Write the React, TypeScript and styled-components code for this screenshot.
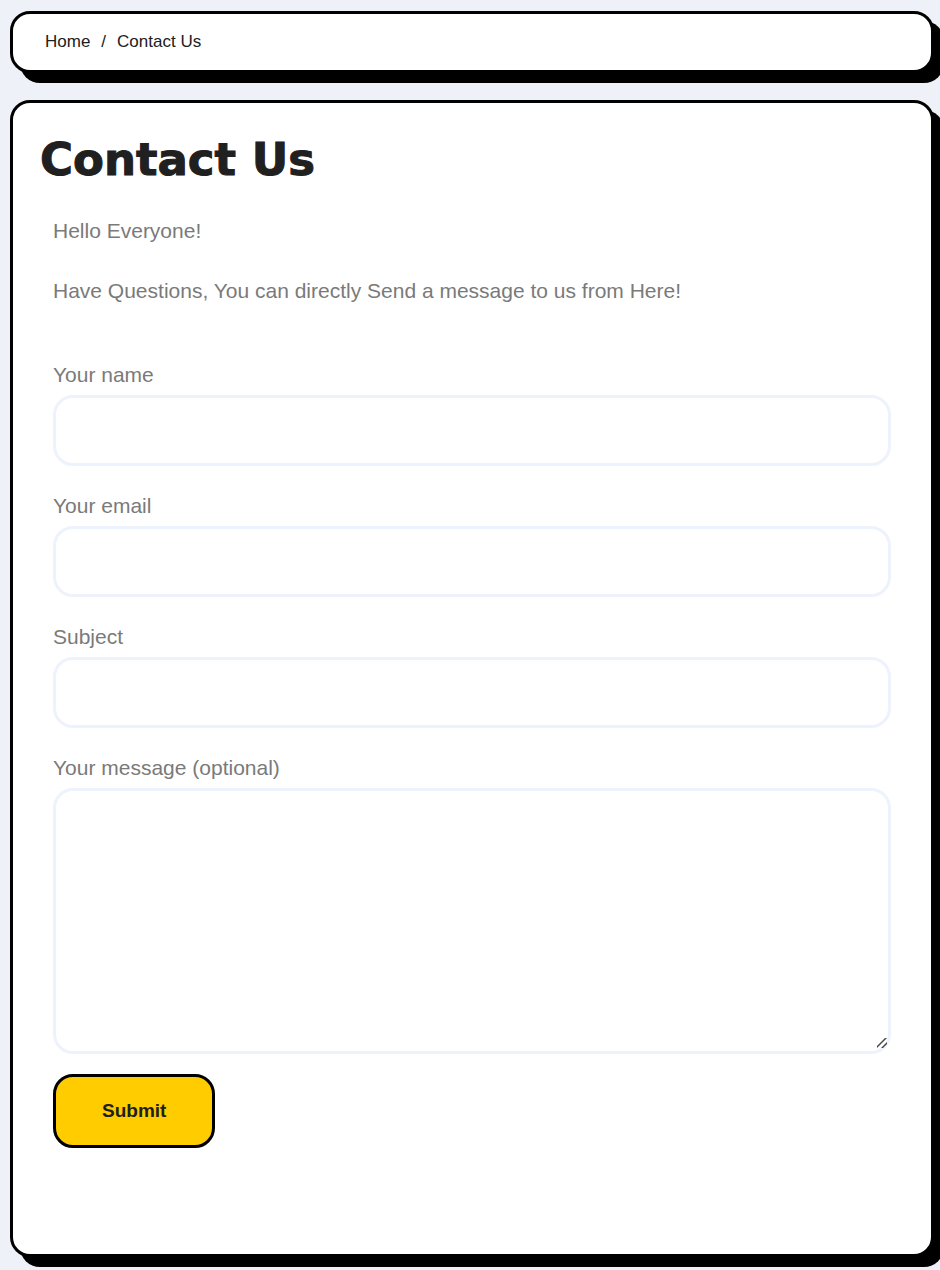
import React from 'react';
import styled, { createGlobalStyle } from 'styled-components';

const GlobalStyle = createGlobalStyle`
  *, *::before, *::after {
    box-sizing: border-box;
  }
  body {
    margin: 0;
    background: #eef1f8;
    color: #7a7a7a;
    font-family: "Liberation Sans", Arial, sans-serif;
    font-size: 21px;
    overflow-x: hidden;
  }
`;

const Page = styled.div`
  display: flex;
  flex-direction: column;
  gap: 27px;
  padding: 11px 6px 13px 10px;
  overflow-x: hidden;
`;

const panel = `
  background: #fff;
  border: 3px solid #000;
  border-radius: 20px;
  box-shadow: 10px 10px 0 #000;
`;

const Breadcrumb = styled.nav`
  ${panel}
  padding: 18px 32px;
`;

const Crumbs = styled.ol`
  display: flex;
  gap: 11px;
  margin: 0;
  padding: 0;
  list-style: none;
  color: #202020;
  font-size: 17px;
  line-height: 20px;
`;

const Crumb = styled.li`
  display: flex;
  gap: 11px;
`;

const CrumbLink = styled.a`
  color: inherit;
  text-decoration: none;
`;

const Card = styled.main`
  ${panel}
  padding: 27px 27px 106px;
`;

const Title = styled.h1`
  margin: 0 0 25px;
  color: #202020;
  font-family: "Arial Black", "DejaVu Sans", sans-serif;
  font-size: 45px;
  font-weight: 900;
  line-height: 60px;
  -webkit-text-stroke: 1px #202020;
`;

const Content = styled.div`
  padding: 0 13px;
`;

const Text = styled.p`
  margin: 0 0 28px;
  line-height: 32px;
`;

const Form = styled.form`
  display: flex;
  flex-direction: column;
  align-items: flex-start;
  gap: 20px;
  margin-top: 48px;
`;

const Field = styled.div`
  display: flex;
  flex-direction: column;
  width: 100%;
`;

const Label = styled.label`
  line-height: 40px;
`;

const control = `
  width: 100%;
  padding: 16px 20px;
  background: #fff;
  border: 3px solid #edf2fc;
  border-radius: 20px;
  color: #202020;
  font: inherit;
  outline: none;
  &:focus {
    border-color: #ffcc00;
  }
`;

const Input = styled.input`
  ${control}
  height: 71px;
`;

const TextArea = styled.textarea`
  ${control}
  display: block;
  height: 266px;
  resize: vertical;
  &::-webkit-resizer {
    background: linear-gradient(
        135deg,
        transparent 39%,
        #444 41% 49%,
        transparent 51% 69%,
        #444 71% 79%,
        transparent 81%
      )
      4px 2px / 10px 10px no-repeat;
  }
`;

const SubmitButton = styled.button`
  height: 74px;
  padding: 0 46px;
  background: #ffcc00;
  border: 3px solid #000;
  border-radius: 20px;
  color: #202020;
  font-family: inherit;
  font-size: 19px;
  font-weight: 700;
  cursor: pointer;
`;

const fields = [
  { id: 'your-name', label: 'Your name', type: 'text' },
  { id: 'your-email', label: 'Your email', type: 'email' },
  { id: 'your-subject', label: 'Subject', type: 'text' },
];

export default function App() {
  return (
    <>
      <GlobalStyle />
      <Page>
        <Breadcrumb>
          <Crumbs>
            <Crumb>
              <CrumbLink href="#home">Home</CrumbLink>
              <span>/</span>
            </Crumb>
            <Crumb>Contact Us</Crumb>
          </Crumbs>
        </Breadcrumb>
        <Card>
          <Title>Contact Us</Title>
          <Content>
            <Text>Hello Everyone!</Text>
            <Text>Have Questions, You can directly Send a message to us from Here!</Text>
            <Form onSubmit={(event) => event.preventDefault()}>
              {fields.map((field) => (
                <Field key={field.id}>
                  <Label htmlFor={field.id}>{field.label}</Label>
                  <Input id={field.id} name={field.id} type={field.type} />
                </Field>
              ))}
              <Field>
                <Label htmlFor="your-message">Your message (optional)</Label>
                <TextArea id="your-message" name="your-message" />
              </Field>
              <SubmitButton type="submit">Submit</SubmitButton>
            </Form>
          </Content>
        </Card>
      </Page>
    </>
  );
}
